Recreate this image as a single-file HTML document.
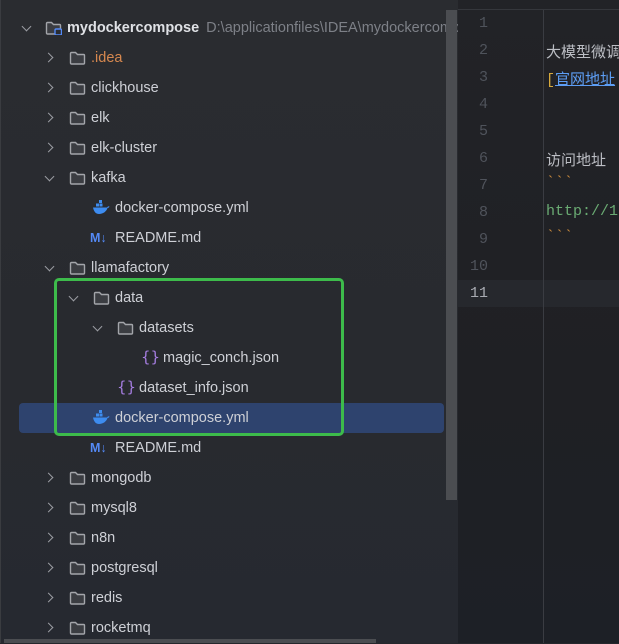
<!DOCTYPE html>
<html><head><meta charset="utf-8"><style>
*{margin:0;padding:0;box-sizing:border-box}
body{width:619px;height:643px;overflow:hidden;background:#25272c;font-family:"Liberation Sans","Noto Sans CJK SC",sans-serif;position:relative}
#tree{position:absolute;left:0;top:0;width:458px;height:643px;background:linear-gradient(180deg,#2a2c30 0%,#282a2f 60%,#262930 100%);border-left:1px solid #3a3c40}
#ed{position:absolute;left:458px;top:0;width:161px;height:643px;background:linear-gradient(180deg,#222327 0%,#1f2024 60%,#1d2026 100%)}
.row{position:absolute;height:30px;line-height:31px;font-size:14.5px;color:#ced0d6;white-space:nowrap}
.chev{position:absolute;width:7px;height:7px;border-right:1.5px solid #9a9ca2;border-bottom:1.5px solid #9a9ca2}
.r{transform:rotate(-45deg)}
.d{transform:rotate(45deg)}
.fold{position:absolute;width:17px;height:14px}
.sel{position:absolute;left:18px;top:403px;width:425px;height:30px;background:#2e436e;border-radius:4px}
.box{position:absolute;left:53px;top:278px;width:290px;height:158px;border:3px solid #3dbb4b;border-radius:5px}
.ln{position:absolute;left:0;width:30px;text-align:right;font-family:"Liberation Mono",monospace;font-size:15px;color:#4f535b}
.tx{position:absolute;left:88px;font-size:15px;color:#bcbec4;white-space:nowrap;font-family:"Liberation Mono","Noto Sans CJK SC",monospace}
.js{position:absolute;line-height:30px;font-size:15px;color:#a57de0;font-family:"DejaVu Sans",sans-serif}
.md{position:absolute;line-height:30px;font-size:12.5px;font-weight:bold;color:#548af7}
.dk{position:absolute}
</style></head><body>
<div id="tree">
<div class="sel"></div>

<div class="chev d" style="left:22px;top:23px"></div>
<svg class="fold" style="left:44px;top:21px" viewBox="0 0 17 14"><path d="M1.5 2.5a1 1 0 0 1 1-1h4l2 2h6a1 1 0 0 1 1 1v7.5a1 1 0 0 1-1 1h-12a1 1 0 0 1-1-1z" fill="#3b3d42" stroke="#a3a5aa" stroke-width="1.4"/><rect x="10" y="8" width="6.5" height="6" rx="1.2" fill="#2a2c30" stroke="#548af7" stroke-width="1.4"/></svg>
<div class="row" style="left:66px;top:13px"><b style="color:#dfe1e5">mydockercompose</b><span style="color:#7d8087;margin-left:7px">D:\applicationfiles\IDEA\mydockercompose</span></div>

<div class="chev r" style="left:44px;top:54px"></div>
<svg class="fold" style="left:68px;top:51px" viewBox="0 0 17 14"><path d="M1.5 2.5a1 1 0 0 1 1-1h4l2 2h6a1 1 0 0 1 1 1v7.5a1 1 0 0 1-1 1h-12a1 1 0 0 1-1-1z" fill="#3b3d42" stroke="#a3a5aa" stroke-width="1.4"/></svg>
<div class="row" style="left:90px;top:43px;color:#d6884f">.idea</div>

<div class="chev r" style="left:44px;top:84px"></div>
<svg class="fold" style="left:68px;top:81px" viewBox="0 0 17 14"><path d="M1.5 2.5a1 1 0 0 1 1-1h4l2 2h6a1 1 0 0 1 1 1v7.5a1 1 0 0 1-1 1h-12a1 1 0 0 1-1-1z" fill="#3b3d42" stroke="#a3a5aa" stroke-width="1.4"/></svg>
<div class="row" style="left:90px;top:73px">clickhouse</div>

<div class="chev r" style="left:44px;top:114px"></div>
<svg class="fold" style="left:68px;top:111px" viewBox="0 0 17 14"><path d="M1.5 2.5a1 1 0 0 1 1-1h4l2 2h6a1 1 0 0 1 1 1v7.5a1 1 0 0 1-1 1h-12a1 1 0 0 1-1-1z" fill="#3b3d42" stroke="#a3a5aa" stroke-width="1.4"/></svg>
<div class="row" style="left:90px;top:103px">elk</div>

<div class="chev r" style="left:44px;top:144px"></div>
<svg class="fold" style="left:68px;top:141px" viewBox="0 0 17 14"><path d="M1.5 2.5a1 1 0 0 1 1-1h4l2 2h6a1 1 0 0 1 1 1v7.5a1 1 0 0 1-1 1h-12a1 1 0 0 1-1-1z" fill="#3b3d42" stroke="#a3a5aa" stroke-width="1.4"/></svg>
<div class="row" style="left:90px;top:133px">elk-cluster</div>

<div class="chev d" style="left:45px;top:173px"></div>
<svg class="fold" style="left:68px;top:171px" viewBox="0 0 17 14"><path d="M1.5 2.5a1 1 0 0 1 1-1h4l2 2h6a1 1 0 0 1 1 1v7.5a1 1 0 0 1-1 1h-12a1 1 0 0 1-1-1z" fill="#3b3d42" stroke="#a3a5aa" stroke-width="1.4"/></svg>
<div class="row" style="left:90px;top:163px">kafka</div>

<svg class="dk" style="left:91px;top:199px" width="18" height="17" viewBox="0 0 18 17"><g fill="#3d8cf0"><rect x="7" y="1" width="3" height="3"/><rect x="4" y="4.5" width="3" height="3"/><rect x="7.5" y="4.5" width="3" height="3"/><path d="M1 8.5h14c1-1.5 2-1.5 2.5-1-0.5 1-1 1.5-2 1.5-1 3.5-4.5 6-8.5 6-3 0-5-2-6-6.5z"/></g></svg>
<div class="row" style="left:114px;top:193px">docker-compose.yml</div>

<span class="md" style="left:89px;top:223px">M↓</span>
<div class="row" style="left:114px;top:223px">README.md</div>

<div class="chev d" style="left:45px;top:263px"></div>
<svg class="fold" style="left:68px;top:261px" viewBox="0 0 17 14"><path d="M1.5 2.5a1 1 0 0 1 1-1h4l2 2h6a1 1 0 0 1 1 1v7.5a1 1 0 0 1-1 1h-12a1 1 0 0 1-1-1z" fill="#3b3d42" stroke="#a3a5aa" stroke-width="1.4"/></svg>
<div class="row" style="left:90px;top:253px">llamafactory</div>

<div class="chev d" style="left:69px;top:293px"></div>
<svg class="fold" style="left:92px;top:291px" viewBox="0 0 17 14"><path d="M1.5 2.5a1 1 0 0 1 1-1h4l2 2h6a1 1 0 0 1 1 1v7.5a1 1 0 0 1-1 1h-12a1 1 0 0 1-1-1z" fill="#3b3d42" stroke="#a3a5aa" stroke-width="1.4"/></svg>
<div class="row" style="left:114px;top:283px">data</div>

<div class="chev d" style="left:93px;top:323px"></div>
<svg class="fold" style="left:116px;top:321px" viewBox="0 0 17 14"><path d="M1.5 2.5a1 1 0 0 1 1-1h4l2 2h6a1 1 0 0 1 1 1v7.5a1 1 0 0 1-1 1h-12a1 1 0 0 1-1-1z" fill="#3b3d42" stroke="#a3a5aa" stroke-width="1.4"/></svg>
<div class="row" style="left:138px;top:313px">datasets</div>

<span class="js" style="left:140px;top:342px">{}</span>
<div class="row" style="left:162px;top:343px">magic_conch.json</div>

<span class="js" style="left:116px;top:372px">{}</span>
<div class="row" style="left:138px;top:373px">dataset_info.json</div>

<svg class="dk" style="left:91px;top:409px" width="18" height="17" viewBox="0 0 18 17"><g fill="#3d8cf0"><rect x="7" y="1" width="3" height="3"/><rect x="4" y="4.5" width="3" height="3"/><rect x="7.5" y="4.5" width="3" height="3"/><path d="M1 8.5h14c1-1.5 2-1.5 2.5-1-0.5 1-1 1.5-2 1.5-1 3.5-4.5 6-8.5 6-3 0-5-2-6-6.5z"/></g></svg>
<div class="row" style="left:114px;top:403px">docker-compose.yml</div>

<span class="md" style="left:89px;top:433px">M↓</span>
<div class="row" style="left:114px;top:433px">README.md</div>

<div class="chev r" style="left:44px;top:474px"></div>
<svg class="fold" style="left:68px;top:471px" viewBox="0 0 17 14"><path d="M1.5 2.5a1 1 0 0 1 1-1h4l2 2h6a1 1 0 0 1 1 1v7.5a1 1 0 0 1-1 1h-12a1 1 0 0 1-1-1z" fill="#3b3d42" stroke="#a3a5aa" stroke-width="1.4"/></svg>
<div class="row" style="left:90px;top:463px">mongodb</div>

<div class="chev r" style="left:44px;top:504px"></div>
<svg class="fold" style="left:68px;top:501px" viewBox="0 0 17 14"><path d="M1.5 2.5a1 1 0 0 1 1-1h4l2 2h6a1 1 0 0 1 1 1v7.5a1 1 0 0 1-1 1h-12a1 1 0 0 1-1-1z" fill="#3b3d42" stroke="#a3a5aa" stroke-width="1.4"/></svg>
<div class="row" style="left:90px;top:493px">mysql8</div>

<div class="chev r" style="left:44px;top:534px"></div>
<svg class="fold" style="left:68px;top:531px" viewBox="0 0 17 14"><path d="M1.5 2.5a1 1 0 0 1 1-1h4l2 2h6a1 1 0 0 1 1 1v7.5a1 1 0 0 1-1 1h-12a1 1 0 0 1-1-1z" fill="#3b3d42" stroke="#a3a5aa" stroke-width="1.4"/></svg>
<div class="row" style="left:90px;top:523px">n8n</div>

<div class="chev r" style="left:44px;top:564px"></div>
<svg class="fold" style="left:68px;top:561px" viewBox="0 0 17 14"><path d="M1.5 2.5a1 1 0 0 1 1-1h4l2 2h6a1 1 0 0 1 1 1v7.5a1 1 0 0 1-1 1h-12a1 1 0 0 1-1-1z" fill="#3b3d42" stroke="#a3a5aa" stroke-width="1.4"/></svg>
<div class="row" style="left:90px;top:553px">postgresql</div>

<div class="chev r" style="left:44px;top:594px"></div>
<svg class="fold" style="left:68px;top:591px" viewBox="0 0 17 14"><path d="M1.5 2.5a1 1 0 0 1 1-1h4l2 2h6a1 1 0 0 1 1 1v7.5a1 1 0 0 1-1 1h-12a1 1 0 0 1-1-1z" fill="#3b3d42" stroke="#a3a5aa" stroke-width="1.4"/></svg>
<div class="row" style="left:90px;top:583px">redis</div>

<div class="chev r" style="left:44px;top:624px"></div>
<svg class="fold" style="left:68px;top:621px" viewBox="0 0 17 14"><path d="M1.5 2.5a1 1 0 0 1 1-1h4l2 2h6a1 1 0 0 1 1 1v7.5a1 1 0 0 1-1 1h-12a1 1 0 0 1-1-1z" fill="#3b3d42" stroke="#a3a5aa" stroke-width="1.4"/></svg>
<div class="row" style="left:90px;top:613px">rocketmq</div>

<div class="box"></div>
</div>
<div style="position:absolute;left:446px;top:10px;width:11px;height:490px;background:#4b4d51"></div>
<div style="position:absolute;left:4px;top:639px;width:372px;height:4px;background:#4b4d51"></div>
<div id="ed">
<div style="position:absolute;left:0;top:9px;width:161px;height:1px;background:#35373c"></div>
<div style="position:absolute;left:0;top:280px;width:161px;height:27px;background:#26282d"></div>
<div style="position:absolute;left:85px;top:10px;width:1px;height:633px;background:#3a3c42"></div>
<div class="ln" style="top:15px">1</div>
<div class="ln" style="top:42px">2</div>
<div class="ln" style="top:69px">3</div>
<div class="ln" style="top:96px">4</div>
<div class="ln" style="top:123px">5</div>
<div class="ln" style="top:150px">6</div>
<div class="ln" style="top:177px">7</div>
<div class="ln" style="top:204px">8</div>
<div class="ln" style="top:231px">9</div>
<div class="ln" style="top:258px">10</div>
<div class="ln" style="top:285px;color:#a8abb2">11</div>
<div class="tx" style="top:41px">大模型微调</div>
<div class="tx" style="top:68px"><span style="color:#d6a93c">[</span><span style="color:#5d9ef5;text-decoration:underline">官网地址</span></div>
<div class="tx" style="top:149px">访问地址</div>
<div class="tx" style="top:174px;color:#c98a3c">&#96;&#96;&#96;</div>
<div class="tx" style="top:203px;color:#6aab73">http://1</div>
<div class="tx" style="top:228px;color:#c98a3c">&#96;&#96;&#96;</div>
</div>
</body></html>
